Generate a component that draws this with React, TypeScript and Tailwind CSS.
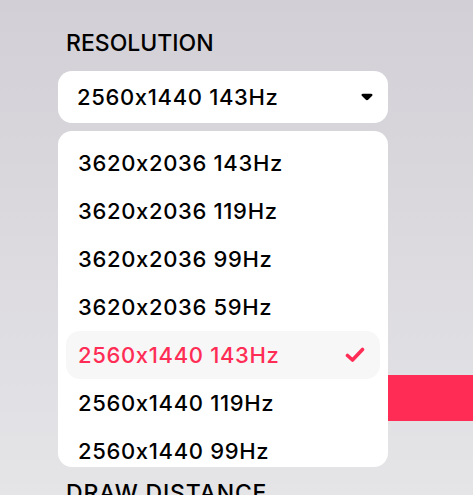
import { useState } from 'react';

const options = [
  '3620x2036 143Hz',
  '3620x2036 119Hz',
  '3620x2036 99Hz',
  '3620x2036 59Hz',
  '2560x1440 143Hz',
  '2560x1440 119Hz',
  '2560x1440 99Hz',
  '2560x1440 59Hz',
];

function Caret() {
  return (
    <svg width="12" height="8" viewBox="0 0 12 8" className="shrink-0">
      <path
        d="M2 0.8h8c1.4 0 2 1 1.2 2L7.4 6.6c-.8.8-2 .8-2.8 0L.8 2.8C0 1.8.6.8 2 .8z"
        fill="#000"
      />
    </svg>
  );
}

function Check() {
  return (
    <svg width="20" height="16" viewBox="0 0 20 16" className="shrink-0">
      <polyline
        points="2.5,8.5 7.5,13 17.5,2.5"
        fill="none"
        stroke="#ff2d55"
        strokeWidth="3.6"
        strokeLinecap="round"
        strokeLinejoin="round"
      />
    </svg>
  );
}

export default function App() {
  const [selected] = useState('2560x1440 143Hz');

  return (
    <div
      className="w-[473px] h-[495px] overflow-hidden bg-gradient-to-b from-[#d2d0d6] to-[#e5e4e7] text-black"
      style={{ fontFamily: 'Inter, "Noto Sans", sans-serif' }}
    >
      <div className="pt-[29px] pl-[58px] w-[388px]">
        {/* Resolution */}
        <div className="pl-2 text-[23px] leading-[28px] font-medium">RESOLUTION</div>

        <div className="relative mt-[14px]">
          <div className="h-[52px] rounded-[14px] bg-white flex items-center justify-between pl-[19px] pr-[15px]">
            <span className="text-[22px] font-medium tracking-[0.03em]">{selected}</span>
            <Caret />
          </div>

          {/* Dropdown menu */}
          <div className="absolute left-0 right-0 top-[60px] z-10 h-[336px] overflow-hidden rounded-[14px] bg-white px-2 pt-2">
            {options.map((opt) => {
              const active = opt === selected;
              return (
                <div
                  key={opt}
                  className={`h-[48px] flex items-center justify-between pl-3 pr-[15px] rounded-[14px] text-[22px] font-medium tracking-[0.03em] ${
                    active ? 'bg-[#f7f7f7] text-[#ff2d55]' : ''
                  }`}
                >
                  <span>{opt}</span>
                  {active && <Check />}
                </div>
              );
            })}
          </div>
        </div>

        {/* Content behind the menu */}
        <div className="mt-[252px] h-[46px] w-[460px] bg-[#ff2d55]" />

        <div className="mt-[58px] pl-2 text-[23px] leading-[28px] font-medium tracking-[0.035em]">DRAW DISTANCE</div>
      </div>
    </div>
  );
}
